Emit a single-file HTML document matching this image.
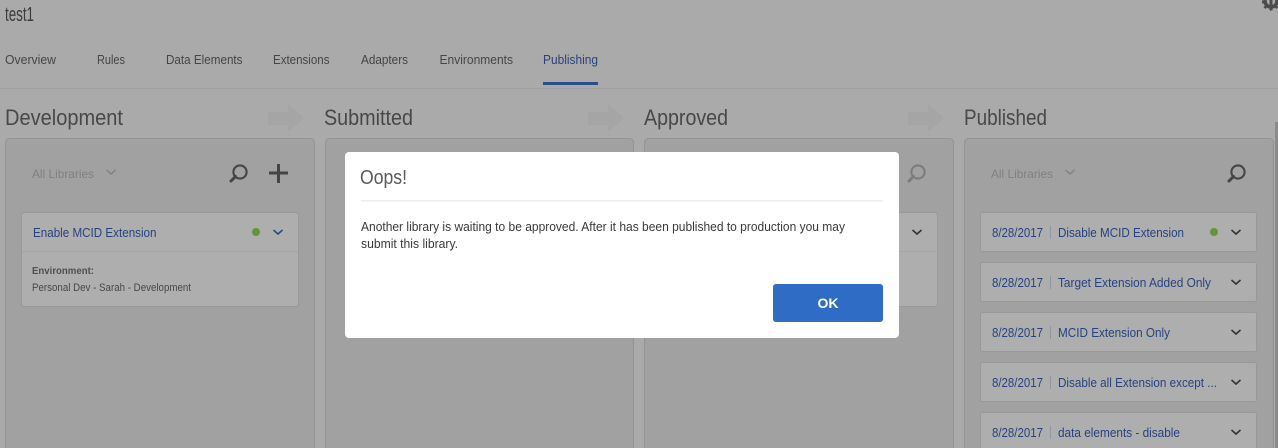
<!DOCTYPE html>
<html><head><meta charset="utf-8"><style>
html,body{margin:0;padding:0;width:1278px;height:448px;overflow:hidden;background:#aaa}
svg{display:block}
text{font-family:"Liberation Sans",sans-serif}
.tab{font-size:12.5px;fill:#454545}
.h{font-size:22px;fill:#484848}
.lib{font-size:12.5px;fill:#284280}
.dim{font-size:12px;fill:#808080}
</style></head><body>
<svg width="1278" height="448" viewBox="0 0 1278 448" xmlns="http://www.w3.org/2000/svg">
<rect width="1278" height="448" fill="#aaa"/>
<defs>
<g id="search" fill="none" stroke-linecap="round"><circle cx="1" cy="-1" r="6.6" stroke-width="2.1"/><path d="M-3.5 3.5L-8 8" stroke-width="3"/></g>
<path id="arrow" d="M0 8H20V0L36 14L20 28V21H0Z" fill="#a5a5a5"/>
<path id="chev" d="M-4.5 -2L0 2L4.500 -2" fill="none" stroke-width="1.6"/>
</defs>
<text x="5" y="21" font-size="20" fill="#3c3c3c" textLength="29" lengthAdjust="spacingAndGlyphs">test1</text>
<g transform="translate(1271,1)"><circle r="6" fill="none" stroke="#4c4c4c" stroke-width="3.500"/><path d="M-1.500 -9.500H1.500V9.500H-1.500Z" fill="#4c4c4c"/><path d="M-6.500 5L-4.500 7M6.500 5L4.500 7M-9 1H-7M9 1H7" stroke="#4c4c4c" stroke-width="3"/></g>
<text class="tab" x="5" y="64" textLength="51" lengthAdjust="spacingAndGlyphs">Overview</text>
<text class="tab" x="97" y="64" textLength="28" lengthAdjust="spacingAndGlyphs">Rules</text>
<text class="tab" x="166" y="64" textLength="76.500" lengthAdjust="spacingAndGlyphs">Data Elements</text>
<text class="tab" x="273" y="64" textLength="56.500" lengthAdjust="spacingAndGlyphs">Extensions</text>
<text class="tab" x="361" y="64" textLength="47" lengthAdjust="spacingAndGlyphs">Adapters</text>
<text class="tab" x="439.500" y="64" textLength="73.500" lengthAdjust="spacingAndGlyphs">Environments</text>
<text class="tab" x="543" y="64" textLength="55" lengthAdjust="spacingAndGlyphs" style="fill:#284280">Publishing</text>
<rect x="543" y="82" width="55" height="3" fill="#2c4d8c"/>
<rect x="0" y="88" width="1278" height="1" fill="#a0a0a0"/>
<text class="h" x="5" y="125" textLength="118" lengthAdjust="spacingAndGlyphs">Development</text>
<text class="h" x="324" y="125" textLength="89" lengthAdjust="spacingAndGlyphs">Submitted</text>
<text class="h" x="644" y="125" textLength="84" lengthAdjust="spacingAndGlyphs">Approved</text>
<text class="h" x="964" y="125" textLength="83" lengthAdjust="spacingAndGlyphs">Published</text>
<use href="#arrow" x="268" y="104"/><use href="#arrow" x="588" y="104"/><use href="#arrow" x="908" y="104"/>
<g fill="#a1a1a1" stroke="#939393">
<rect x="5.500" y="138.500" width="309" height="330" rx="4"/>
<rect x="325.500" y="138.500" width="308" height="330" rx="4"/>
<rect x="644.500" y="138.500" width="309" height="330" rx="4"/>
<rect x="964.500" y="138.500" width="309" height="330" rx="4"/>
</g>
<rect x="1275" y="122" width="3" height="326" fill="#8b8b8b"/>
<text class="dim" x="32" y="178" textLength="62" lengthAdjust="spacingAndGlyphs">All Libraries</text>
<use href="#chev" x="111" y="172" stroke="#858585"/>
<use href="#search" x="239" y="173" stroke="#454545"/>
<path d="M269 173H288M278.500 164V183" stroke="#454545" stroke-width="3" fill="none"/>
<g fill="#aeaeae" stroke="#999">
<rect x="21.500" y="212.500" width="277" height="94" rx="3"/>
<rect x="650.500" y="212.500" width="287" height="94" rx="3"/>
</g>
<path d="M22 251.500H298M650 251.500H937" stroke="#a4a4a4"/>
<text class="lib" x="33" y="237" textLength="123.500" lengthAdjust="spacingAndGlyphs">Enable MCID Extension</text>
<circle cx="256" cy="232" r="4" fill="#64953c"/>
<use href="#chev" x="278" y="232" stroke="#2c4a86"/>
<text x="32" y="274" font-size="10.500" font-weight="bold" fill="#4f4f4f" textLength="62" lengthAdjust="spacingAndGlyphs">Environment:</text>
<text x="32" y="291" font-size="11" fill="#484848" textLength="159" lengthAdjust="spacingAndGlyphs">Personal Dev - Sarah - Development</text>
<use href="#chev" x="917" y="232" stroke="#333"/>
<use href="#search" x="917" y="173" stroke="#7c7c7c"/>
<text class="dim" x="991" y="178" textLength="62" lengthAdjust="spacingAndGlyphs">All Libraries</text>
<use href="#chev" x="1070" y="172" stroke="#858585"/>
<use href="#search" x="1237" y="173" stroke="#454545"/>
<g fill="#aeaeae" stroke="#999">
<rect x="980.500" y="212.500" width="276" height="39" rx="2"/>
<rect x="980.500" y="262.500" width="276" height="39" rx="2"/>
<rect x="980.500" y="312.500" width="276" height="39" rx="2"/>
<rect x="980.500" y="362.500" width="276" height="39" rx="2"/>
<rect x="980.500" y="412.500" width="276" height="39" rx="2"/>
</g>
<g fill="#8f96a4"><rect x="1050" y="226" width="1" height="13"/><rect x="1050" y="276" width="1" height="13"/><rect x="1050" y="326" width="1" height="13"/><rect x="1050" y="376" width="1" height="13"/><rect x="1050" y="426" width="1" height="13"/></g>
<text class="lib" x="992" y="237" textLength="51" lengthAdjust="spacingAndGlyphs">8/28/2017</text>
<text class="lib" x="992" y="287" textLength="51" lengthAdjust="spacingAndGlyphs">8/28/2017</text>
<text class="lib" x="992" y="337" textLength="51" lengthAdjust="spacingAndGlyphs">8/28/2017</text>
<text class="lib" x="992" y="387" textLength="51" lengthAdjust="spacingAndGlyphs">8/28/2017</text>
<text class="lib" x="992" y="437" textLength="51" lengthAdjust="spacingAndGlyphs">8/28/2017</text>
<text class="lib" x="1058" y="237" textLength="126" lengthAdjust="spacingAndGlyphs">Disable MCID Extension</text>
<text class="lib" x="1058" y="287" textLength="153" lengthAdjust="spacingAndGlyphs">Target Extension Added Only</text>
<text class="lib" x="1058" y="337" textLength="112" lengthAdjust="spacingAndGlyphs">MCID Extension Only</text>
<text class="lib" x="1058" y="387" textLength="159" lengthAdjust="spacingAndGlyphs">Disable all Extension except ...</text>
<text class="lib" x="1058" y="437" textLength="122" lengthAdjust="spacingAndGlyphs">data elements - disable</text>
<circle cx="1214" cy="232" r="4" fill="#64953c"/>
<use href="#chev" x="1236" y="232" stroke="#333"/>
<use href="#chev" x="1236" y="282" stroke="#333"/>
<use href="#chev" x="1236" y="332" stroke="#333"/>
<use href="#chev" x="1236" y="382" stroke="#333"/>
<use href="#chev" x="1236" y="432" stroke="#333"/>
<rect x="345" y="152" width="554" height="186" rx="4" fill="#fff"/>
<text x="360" y="184" font-size="20" fill="#5a5a5a" textLength="47" lengthAdjust="spacingAndGlyphs">Oops!</text>
<rect x="361" y="200" width="522" height="1.500" fill="#eee"/>
<text x="361" y="231" font-size="12.500" fill="#3a3a3a" textLength="484" lengthAdjust="spacingAndGlyphs">Another library is waiting to be approved. After it has been published to production you may</text>
<text x="361" y="248" font-size="12.500" fill="#3a3a3a" textLength="97" lengthAdjust="spacingAndGlyphs">submit this library.</text>
<rect x="773" y="284" width="110" height="38" rx="3" fill="#2f6cc6"/>
<text x="828" y="308" font-size="14" font-weight="bold" fill="#fff" text-anchor="middle">OK</text>
</svg>
</body></html>
